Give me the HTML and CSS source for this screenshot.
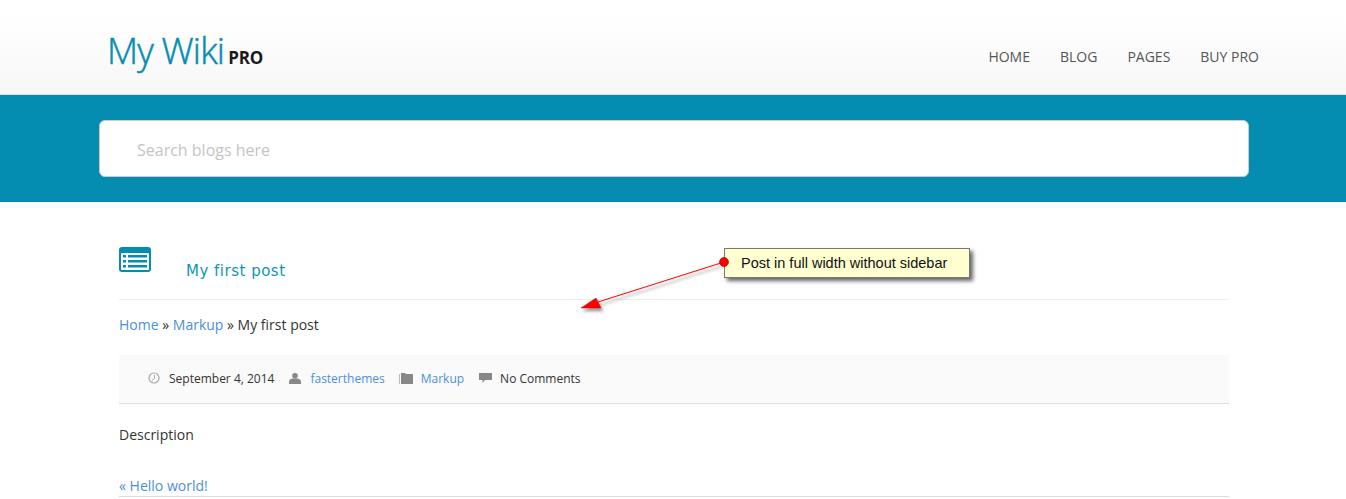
FILE: index.html
```html
<!DOCTYPE html>
<html lang="en">
<head>
<meta charset="utf-8">
<title>My Wiki PRO</title>
<link rel="stylesheet" href="styles.css">
</head>
<body>
<header class="site-header">
  <div class="header-inner">
    <a class="logo" href="#"><span class="logo-name">My Wiki</span><span class="logo-pro">PRO</span></a>
    <nav class="nav">
      <a href="#">HOME</a>
      <a href="#">BLOG</a>
      <a href="#">PAGES</a>
      <a href="#">BUY PRO</a>
    </nav>
  </div>
</header>
<section class="search-band">
  <div class="search-box">Search blogs here</div>
</section>
<main class="content">
  <div class="title-row">
    <svg class="title-icon" width="32" height="25" viewBox="0 0 32 25">
      <rect width="32" height="25" rx="3" fill="#058db1"/>
      <rect x="2" y="6" width="28" height="17" rx="1" fill="#fff"/>
      <path fill="#058db1" d="M4 8h3v2.500H4zM9 8h19v2.500H9zM4 13h3v2.500H4zM9 13h19v2.500H9zM4 18h3v2.500H4zM9 18h19v2.500H9z"/>
    </svg>
    <h1 class="post-title">My first post</h1>
  </div>
  <div class="crumbs"><a href="#">Home</a> » <a href="#">Markup</a> » My first post</div>
  <div class="meta">
    <svg class="ic ic-clock" width="12" height="12" viewBox="0 0 12 12"><circle cx="6" cy="6" r="5" fill="none" stroke="#aaa" stroke-width="1.200"/><path d="M6.500 3v3.500L4 8.500" fill="none" stroke="#aaa"/></svg>
    <span class="meta-text">September 4, 2014</span>
    <svg class="ic ic-user" width="12" height="11" viewBox="0 0 12 11"><circle cx="6" cy="2.800" r="2.800" fill="#888"/><path fill="#888" d="M0 11V8.500C0 7 2 5.500 3.500 5.500h5C10 5.500 12 7 12 8.500V11z"/></svg>
    <a class="meta-link" href="#">fasterthemes</a>
    <svg class="ic ic-folder" width="14" height="12" viewBox="0 0 14 12"><path fill="#bbb" d="M0 2h1v10H0z"/><path fill="#888" d="M2 1h4l1 1h7v10H2z"/></svg>
    <a class="meta-link" href="#">Markup</a>
    <svg class="ic ic-comment" width="13" height="10" viewBox="0 0 13 10"><path fill="#888" d="M0 0h13v7H6L3.500 10V7H0z"/></svg>
    <span class="meta-text">No Comments</span>
  </div>
  <p class="description">Description</p>
  <div class="prev-link"><a href="#">« Hello world!</a></div>
</main>
<div class="callout">Post in full width without sidebar</div>
<svg class="arrow" width="170" height="70" viewBox="0 0 170 70">
  <defs><filter id="sh" x="-30%" y="-30%" width="160%" height="160%"><feDropShadow dx="2" dy="3" stdDeviation="1.500" flood-color="#000" flood-opacity=".4"/></filter></defs>
  <g filter="url(#sh)">
    <path d="M152 9 L26 49" stroke="#f11" stroke-width="1.100" fill="none"/>
    <path d="M9 55 L24 45 L29 55 Z" fill="#f00" stroke="#c00" stroke-width=".5"/>
  </g>
  <circle cx="152" cy="9" r="4.500" fill="#f00" stroke="#900" stroke-width=".6"/>
</svg>
</body>
</html>
```
FILE: styles.css
```css
* { box-sizing: border-box; }
html, body { margin: 0; padding: 0; }
body {
  position: relative;
  height: 499px;
  overflow: hidden;
  background: #fff;
  font-family: "Open Sans", sans-serif;
  font-size: 14px;
  color: #333;
}
a { color: #4a8fdb; text-decoration: none; }

.site-header {
  height: 95px;
  background: linear-gradient(#fff 15%, #f7f7f7);
  border-bottom: 1px solid #ddd;
}
.header-inner {
  height: 94px;
  padding: 0 87px 0 107px;
  display: flex;
  align-items: flex-start;
  justify-content: space-between;
}
.logo { display: flex; align-items: baseline; padding-top: 27px; }
.logo-name {
  font-size: 36px;
  line-height: 48px;
  letter-spacing: -.8px;
  color: #058db1;
  font-family: "Open Sans", sans-serif;
  font-weight: 300;
  -webkit-text-stroke: .5px #058db1;
}
.logo-pro {
  margin-left: 4px;
  font-size: 17px;
  font-weight: 700;
  color: #1a1a1a;
  letter-spacing: -.1px;
}
.nav { display: flex; gap: 30px; padding-top: 47px; }
.nav a { font-size: 14px; line-height: 20px; color: #555; }

.search-band {
  height: 107px;
  padding: 25px 97px 0 99px;
  background: #058db1;
}
.search-box {
  height: 57px;
  padding-left: 37px;
  background: #fff;
  border: 1px solid #ccc;
  border-radius: 6px;
  font-size: 16px;
  line-height: 58px;
  color: #c4c4c4;
}

.content { padding: 0 117px 0 119px; }
.title-row {
  height: 98px;
  padding-top: 45px;
  display: flex;
  align-items: flex-start;
  border-bottom: 1px solid #eee;
}
.title-icon { display: block; flex: none; }
.post-title {
  margin: 12px 0 0 35px;
  font-family: "DejaVu Sans", sans-serif;
  font-size: 15px;
  line-height: 24px;
  letter-spacing: .5px;
  font-weight: 400;
  color: #0f96ba;
}
.crumbs { height: 55px; padding-top: 15px; line-height: 20px; color: #333; }
.meta {
  height: 49px;
  padding: 0 0 2px 29px;
  display: flex;
  align-items: center;
  background: #fafafa;
  border-bottom: 1px solid #ddd;
  font-size: 12px;
}
.ic { flex: none; }
.meta-text { color: #333; }
.ic-clock { margin-right: 9px; }
.ic-user { margin: 0 9px 0 15px; }
.ic-folder { margin: 0 8px 0 14px; }
.ic-comment { margin: 0 8px 0 15px; }
.description { margin: 0; padding-top: 21px; height: 72px; line-height: 20px; }
.prev-link { height: 21px; line-height: 20px; border-bottom: 1px solid #ddd; }

.arrow { position: absolute; left: 572px; top: 253px; }
.callout {
  position: absolute;
  left: 724px;
  top: 248px;
  width: 246px;
  height: 30px;
  padding-left: 16px;
  background: #ffffd0;
  border: 1px solid #777;
  box-shadow: 3px 3px 4px rgba(0,0,0,.6);
  font-family: "Liberation Sans", sans-serif;
  font-size: 14.5px;
  line-height: 28px;
  color: #111;
}
```
